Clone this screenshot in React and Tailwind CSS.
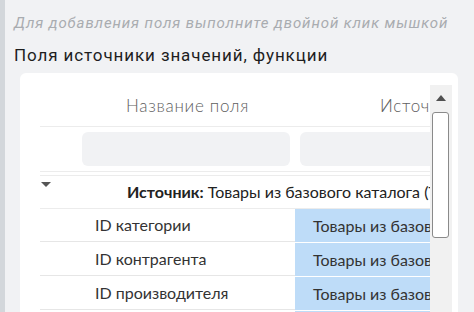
const rows = ['ID категории', 'ID контрагента', 'ID производителя', 'ID товара'];

export default function App() {
  return (
    <div className="flex h-[312px] w-[474px] overflow-hidden bg-[#f1f2f4] font-['Roboto',sans-serif]">
      <div className="w-[5px] shrink-0 bg-[#d3d7db]" />
      <div className="flex min-w-0 flex-1 flex-col pl-[9px]">
        <div className="whitespace-nowrap pt-[13px] text-[15px] italic leading-[20px] tracking-[0.9px] text-[#a9acb0]">
          Для добавления поля выполните двойной клик мышкой
        </div>
        <div className="mt-[11px] whitespace-nowrap text-[17px] leading-[22px] tracking-[0.9px] text-[#1e1e1e]">
          Поля источники значений, функции
        </div>
        <div className="ml-[6px] mt-[7px] flex w-[438px] flex-1 rounded-t-[6px] bg-white pl-[20px] pr-[6px] pt-[12px]">
          <div className="min-w-0 flex-1 overflow-hidden">
            <div className="w-[600px] font-['Lato',sans-serif]">
              <div className="flex h-[42px] items-center border-b border-[#ececec] text-[17px] font-light tracking-[0.7px] text-[#606060]">
                <div className="w-[40px] shrink-0" />
                <div className="w-[215px] shrink-0 text-center">Название поля</div>
                <div className="w-[305px] shrink-0 pl-[85px]">Источник</div>
              </div>
              <div className="flex h-[45px] items-center border-b border-[#ececec]">
                <div className="w-[42px] shrink-0" />
                <div className="h-[34px] w-[208px] shrink-0 rounded-[6px] bg-[#f1f2f4]" />
                <div className="ml-[10px] h-[34px] w-[200px] shrink-0 rounded-[6px] bg-[#f1f2f4]" />
              </div>
              <div className="mt-[3px] flex h-[34px] border-y border-[#ececec]">
                <div className="w-[40px] shrink-0 pt-[6px]">
                  <svg width="10" height="6" viewBox="0 0 10 6" className="ml-[1px]">
                    <path d="M0 0 L10 0 L5 5 Z" fill="#555" />
                  </svg>
                </div>
                <div className="flex items-center whitespace-nowrap pl-[47px] text-[16px] text-[#222]">
                  <span className="font-bold">Источник:</span>
                  <span className="ml-[4px]">Товары из базового каталога (Товары)</span>
                </div>
              </div>
              {rows.map((name) => (
                <div key={name} className="flex h-[34px] border-b border-white">
                  <div className="flex w-[255px] shrink-0 items-center border-b border-[#e6e6e6] pl-[55px] text-[16px] text-[#333]">
                    {name}
                  </div>
                  <div className="flex w-[200px] shrink-0 items-center whitespace-nowrap bg-[#bedcf8] pl-[18px] text-[16px] text-[#333]">
                    Товары из базового каталога
                  </div>
                </div>
              ))}
            </div>
          </div>
          <div className="relative w-[22px] shrink-0 bg-[#f1f1f1]">
            <svg width="10" height="6" viewBox="0 0 10 6" className="absolute left-[6px] top-[10px]">
              <path d="M0 6 L10 6 L5 0 Z" fill="#505050" />
            </svg>
            <div className="absolute left-[2px] top-[27px] h-[126px] w-[17px] rounded-[3px] border border-[#8a8a8a] bg-white" />
          </div>
        </div>
      </div>
    </div>
  );
}
